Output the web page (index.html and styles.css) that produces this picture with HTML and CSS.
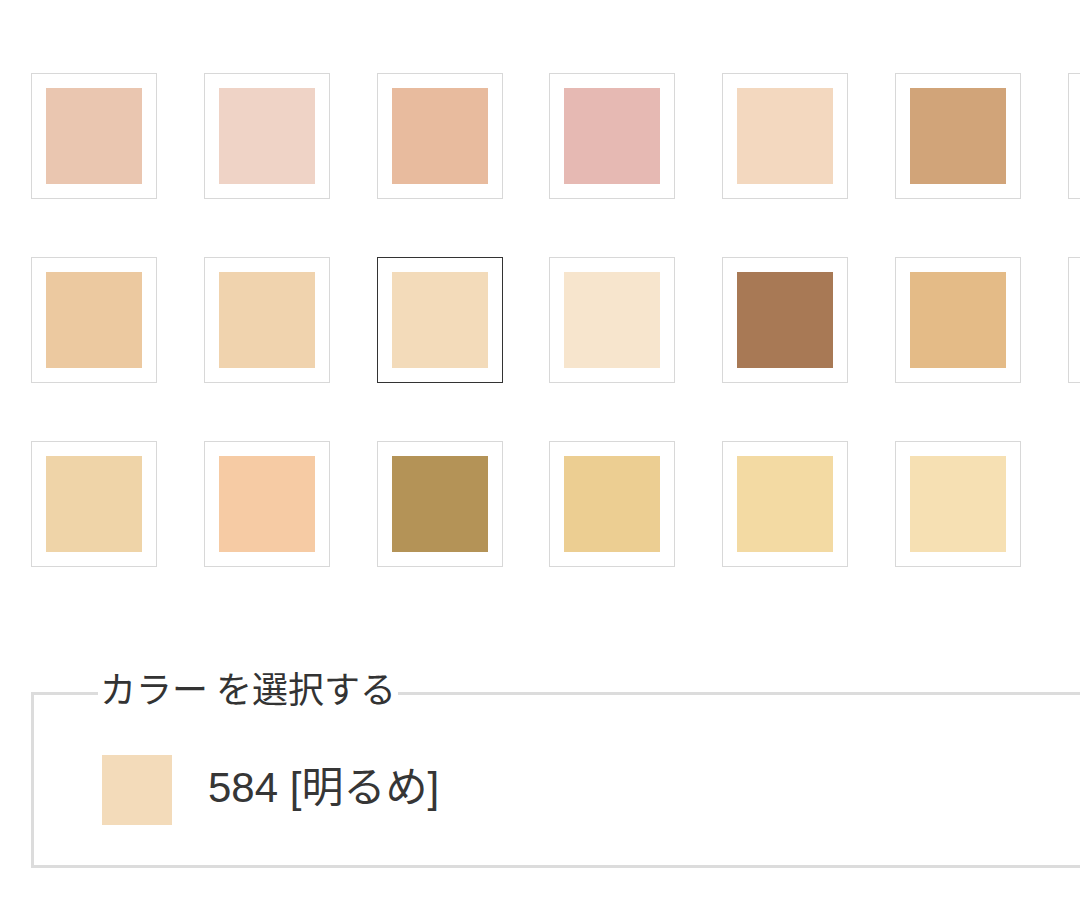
FILE: index.html
```html
<!DOCTYPE html>
<html lang="ja">
<head>
<meta charset="utf-8">
<link rel="stylesheet" href="styles.css">
</head>
<body>
<div class="page">
  <div class="grid">
    <div class="sw"><span class="chip c1"></span></div>
    <div class="sw"><span class="chip c2"></span></div>
    <div class="sw"><span class="chip c3"></span></div>
    <div class="sw"><span class="chip c4"></span></div>
    <div class="sw"><span class="chip c5"></span></div>
    <div class="sw"><span class="chip c6"></span></div>
    <div class="sw"><span class="chip c7"></span></div>
    <div class="sw"><span class="chip c8"></span></div>
    <div class="sw"><span class="chip c9"></span></div>
    <div class="sw selected"><span class="chip c10"></span></div>
    <div class="sw"><span class="chip c11"></span></div>
    <div class="sw"><span class="chip c12"></span></div>
    <div class="sw"><span class="chip c13"></span></div>
    <div class="sw"><span class="chip c14"></span></div>
    <div class="sw"><span class="chip c15"></span></div>
    <div class="sw"><span class="chip c16"></span></div>
    <div class="sw"><span class="chip c17"></span></div>
    <div class="sw"><span class="chip c18"></span></div>
    <div class="sw"><span class="chip c19"></span></div>
    <div class="sw"><span class="chip c20"></span></div>
  </div>
  <fieldset class="picked">
    <legend class="picked-title">カラー を選択する</legend>
    <div class="picked-row">
      <span class="picked-chip"></span>
      <span class="picked-name">584 [明るめ]</span>
    </div>
  </fieldset>
</div>
</body>
</html>
```
FILE: styles.css
```css
html, body {
  margin: 0;
  padding: 0;
  background: #fff;
  overflow: hidden;
}
body {
  font-family: "Liberation Sans", "Noto Sans CJK JP", sans-serif;
  color: #333;
}
.page {
  padding: 73px 0 0 31px;
  width: 1300px;
}
.grid {
  display: grid;
  grid-template-columns: repeat(7, 126px);
  column-gap: 46.8px;
  row-gap: 58px;
}
.sw {
  box-sizing: border-box;
  width: 126px;
  height: 126px;
  border: 1.5px solid #d8d8d8;
  display: flex;
  align-items: center;
  justify-content: center;
  background: #fff;
}
.sw.selected {
  border: 1.5px solid #333;
}
.chip {
  display: block;
  width: 96px;
  height: 96px;
}
.c1 { background: #eac6b0; }
.c2 { background: #efd3c6; }
.c3 { background: #e8bb9e; }
.c4 { background: #e6b9b3; }
.c5 { background: #f3d8bf; }
.c6 { background: #d1a479; }
.c7 { background: #f0d4bd; }
.c8 { background: #ecc9a0; }
.c9 { background: #f0d3ae; }
.c10 { background: #f3dbba; }
.c11 { background: #f7e5cd; }
.c12 { background: #a87955; }
.c13 { background: #e4bb87; }
.c14 { background: #eccfa5; }
.c15 { background: #efd4a8; }
.c16 { background: #f6cba4; }
.c17 { background: #b49357; }
.c18 { background: #ecce92; }
.c19 { background: #f3daa3; }
.c20 { background: #f6e0b3; }

.picked {
  box-sizing: border-box;
  margin: 100px 0 0 0;
  width: 1100px;
  height: 201px;
  border: 3px solid #dcdcdc;
  padding: 0 0 0 64px;
}
.picked-title {
  font-family: "Noto Sans CJK JP", sans-serif;
  font-size: 36px;
  line-height: 40px;
  padding: 0 2px 12px;
  color: #333;
}
.picked-row {
  display: flex;
  align-items: center;
  gap: 36px;
  margin-top: 34px;
  margin-left: 4px;
}
.picked-chip {
  display: block;
  width: 70px;
  height: 70px;
  background: #f3dbba;
}
.picked-name {
  font-family: "Liberation Sans", "Noto Sans CJK JP", sans-serif;
  font-size: 42px;
  color: #363636;
  margin-bottom: 12px;
}
```
